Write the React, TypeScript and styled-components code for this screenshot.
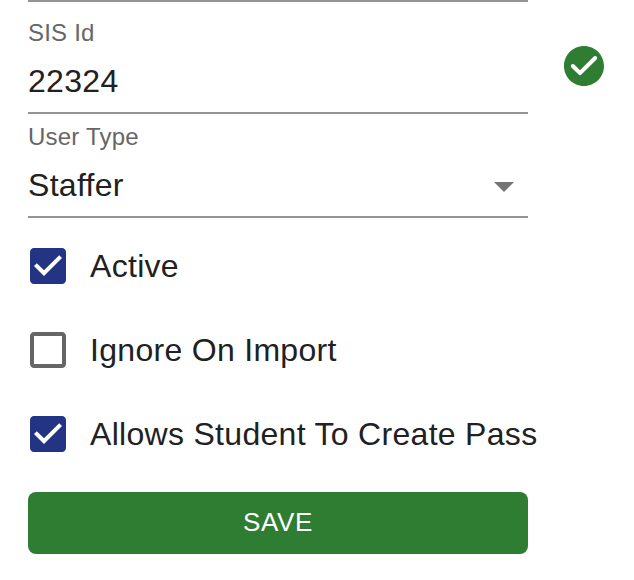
import React from 'react';
import styled, { createGlobalStyle } from 'styled-components';

const Global = createGlobalStyle`
  * { box-sizing: border-box; }
  body { margin: 0; background: #fff; font-family: "Liberation Sans", Arial, sans-serif; color: #212121; overflow: hidden; }
`;
const Page = styled.main`
  display: flex; align-items: flex-start; width: 634px; height: 580px; padding-left: 28px; background: #fff;
`;
const Form = styled.form`
  width: 500px; flex: none; border-top: 2px solid #949494; display: flex; flex-direction: column;
`;
const Field = styled.div<{ $height: number }>`
  height: ${p => p.$height}px; border-bottom: 2px solid #949494; display: flex; flex-direction: column;
  justify-content: flex-end;
`;
const Label = styled.label`
  height: 32px; line-height: 28px; font-size: 24px; letter-spacing: .22px; color: #666; white-space: nowrap;
`;
const Value = styled.div`
  height: 61px; display: flex; align-items: center; justify-content: space-between; padding-right: 14px;
  font-size: 32px; letter-spacing: .3px;
`;
const Arrow = styled.span`
  border: 10px solid transparent; border-top-color: #757575; border-bottom: 0; margin-top: 3px;
`;
const Options = styled.div`
  padding-top: 6px; display: flex; flex-direction: column;
`;
const Option = styled.label`
  height: 84px; display: flex; align-items: center; gap: 18px; font-size: 32px; letter-spacing: .3px; white-space: nowrap;
  svg { width: 48px; height: 48px; margin-left: -4px; flex: none; }
`;
const Save = styled.button`
  height: 62px; margin-top: 16px; padding: 0 0 2px; border: 0; border-radius: 8px; background: #2e7d32; color: #fff;
  font: 26px "Liberation Sans", Arial, sans-serif; letter-spacing: .7px;
`;
const Status = styled.div`
  margin: 42px 0 0 32px; width: 48px; height: 48px;
  svg { display: block; width: 48px; height: 48px; }
`;

const Check = ({ checked }: { checked: boolean }) => (
  <svg viewBox="0 0 24 24" fill={checked ? '#243485' : '#666'}>
    <path d={checked
      ? 'M19 3H5c-1.11 0-2 .9-2 2v14c0 1.1.89 2 2 2h14c1.11 0 2-.9 2-2V5c0-1.1-.89-2-2-2zm-9 14l-5-5 1.41-1.41L10 14.17l7.59-7.59L19 8l-9 9z'
      : 'M19 5v14H5V5h14m0-2H5c-1.1 0-2 .9-2 2v14c0 1.1.9 2 2 2h14c1.1 0 2-.9 2-2V5c0-1.1-.9-2-2-2z'} />
  </svg>
);

export default function App() {
  const options = [
    { name: 'Active', checked: true },
    { name: 'Ignore On Import', checked: false },
    { name: 'Allows Student To Create Pass', checked: true },
  ];
  return (
    <Page>
      <Global />
      <Form>
        <Field $height={112}><Label>SIS Id</Label><Value>22324</Value></Field>
        <Field $height={104}><Label>User Type</Label><Value>Staffer<Arrow /></Value></Field>
        <Options>{options.map(o => <Option key={o.name}><Check checked={o.checked} />{o.name}</Option>)}</Options>
        <Save type="button">SAVE</Save>
      </Form>
      <Status>
        <svg viewBox="0 0 24 24" fill="#2e7d32"><path d="M12 2C6.48 2 2 6.48 2 12s4.48 10 10 10 10-4.48 10-10S17.52 2 12 2zM9.29 16.29 5.7 12.7c-.39-.39-.39-1.02 0-1.41.39-.39 1.02-.39 1.41 0L10 14.17l6.88-6.88c.39-.39 1.02-.39 1.41 0 .39.39.39 1.02 0 1.41l-7.59 7.59c-.38.39-1.02.39-1.41 0z" /></svg>
      </Status>
    </Page>
  );
}
